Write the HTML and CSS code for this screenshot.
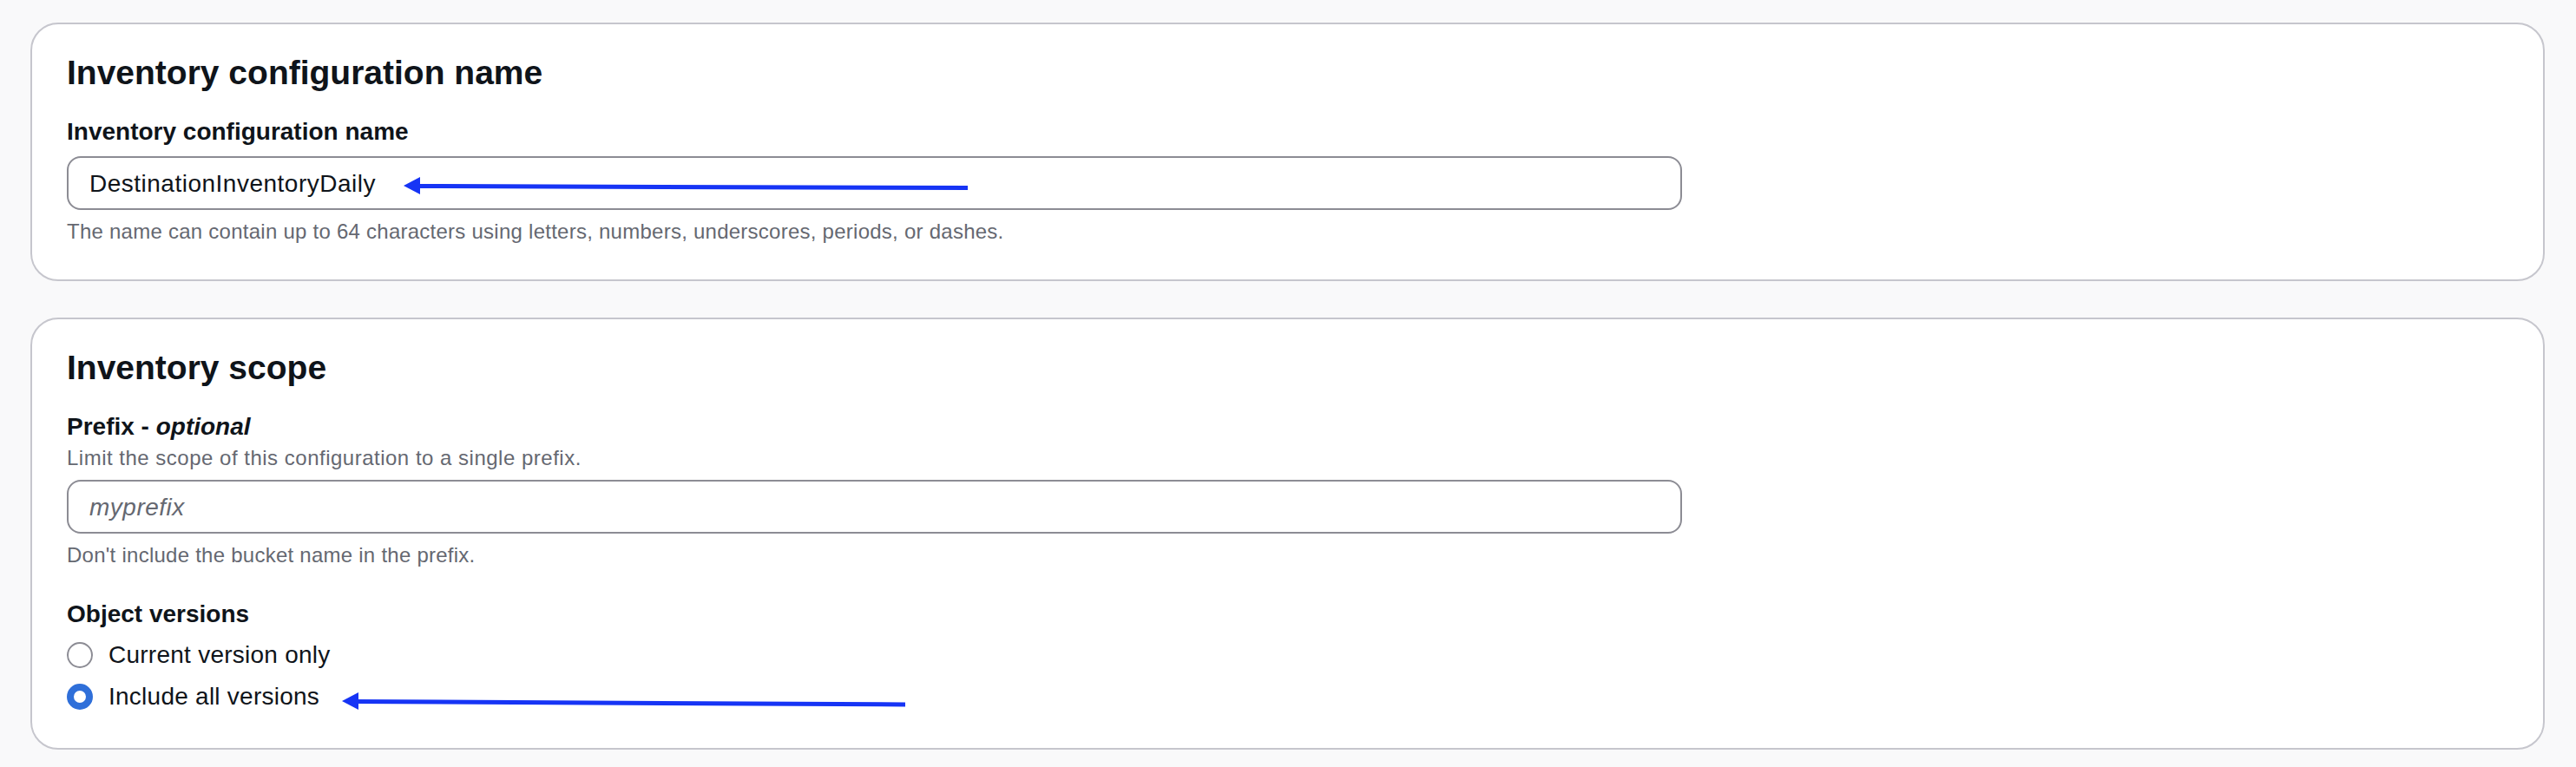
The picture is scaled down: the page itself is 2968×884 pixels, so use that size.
FILE: index.html
```html
<!DOCTYPE html>
<html lang="en">
<head>
<meta charset="utf-8">
<title>Inventory configuration</title>
<link rel="stylesheet" href="styles.css">
</head>
<body>
<main class="page">
  <section class="card">
    <h2 class="card-title">Inventory configuration name</h2>
    <div class="field">
      <label class="field-label" for="cfg-name">Inventory configuration name</label>
      <input class="text-input" id="cfg-name" type="text" value="DestinationInventoryDaily">
      <p class="field-hint">The name can contain up to 64 characters using letters, numbers, underscores, periods, or dashes.</p>
    </div>
  </section>

  <section class="card">
    <h2 class="card-title">Inventory scope</h2>
    <div class="field">
      <label class="field-label" for="cfg-prefix">Prefix - <i>optional</i></label>
      <div class="field-desc">Limit the scope of this configuration to a single prefix.</div>
      <input class="text-input text-input-after-desc" id="cfg-prefix" type="text" placeholder="myprefix">
      <p class="field-hint">Don't include the bucket name in the prefix.</p>
    </div>
    <div class="field field-spaced">
      <div class="field-label">Object versions</div>
      <div class="radio-group">
        <label class="radio"><input class="radio-ctrl" type="radio" name="versions"><span class="radio-label">Current version only</span></label>
        <label class="radio"><input class="radio-ctrl" type="radio" name="versions" checked><span class="radio-label">Include all versions</span></label>
      </div>
    </div>
  </section>

  <svg class="annotations" width="2968" height="884" viewBox="0 0 2968 884" aria-hidden="true">
    <line x1="478" y1="214.5" x2="1115" y2="216.5" stroke="#1634f5" stroke-width="5"/>
    <polygon points="465,214 484,204 484,224" fill="#1634f5"/>
    <line x1="406" y1="808.5" x2="1043" y2="812" stroke="#1634f5" stroke-width="5"/>
    <polygon points="394,808 413,798 413,818" fill="#1634f5"/>
  </svg>
</main>
</body>
</html>
```

FILE: styles.css
```css
* {
  box-sizing: border-box;
}

html,
body {
  margin: 0;
  height: 100%;
}

body {
  background: #f9f9fa;
  font-family: "Liberation Sans", Arial, sans-serif;
  color: #0f141a;
}

.page {
  position: relative;
  height: 884px;
  overflow: hidden;
  padding: 26px 36px 0 35px;
  display: flex;
  flex-direction: column;
  gap: 42px;
}

.card {
  background: #ffffff;
  border: 2px solid #c6c6cd;
  border-radius: 32px;
  padding: 32px 40px 39px;
}

.card-title {
  margin: 0;
  font-size: 39px;
  line-height: 48px;
  font-weight: 700;
}

.field {
  margin-top: 24px;
  display: flex;
  flex-direction: column;
  align-items: flex-start;
}

.field-spaced {
  margin-top: 32px;
}

.field-label {
  display: block;
  font-size: 28px;
  line-height: 40px;
  font-weight: 700;
}

.field-desc,
.field-hint {
  margin: 0;
  font-size: 24px;
  line-height: 32px;
  color: #656871;
}

.field-desc {
  letter-spacing: 0.5px;
}

.field-hint {
  margin-top: 9px;
  letter-spacing: 0.25px;
}

.text-input {
  margin-top: 8px;
  width: 1861px;
  height: 62px;
  border: 2px solid #8c8c94;
  border-radius: 16px;
  padding: 2px 24px 0;
  background: #ffffff;
  font-family: "Liberation Sans", Arial, sans-serif;
  font-size: 28px;
  line-height: 40px;
  letter-spacing: 0.5px;
  color: #0f141a;
  outline: none;
}

.text-input-after-desc {
  margin-top: 9px;
}

.text-input::placeholder {
  color: #656871;
  font-style: italic;
}

.radio-group {
  margin-top: 7px;
  display: flex;
  flex-direction: column;
  gap: 8px;
}

.radio {
  display: flex;
  align-items: center;
  gap: 18px;
  height: 40px;
  font-size: 28px;
  line-height: 40px;
}

.radio-label {
  letter-spacing: 0.25px;
}

.radio-ctrl {
  appearance: none;
  -webkit-appearance: none;
  margin: 0;
  width: 30px;
  height: 30px;
  border: 2px solid #8c8c94;
  border-radius: 50%;
  background: #ffffff;
  flex: none;
}

.radio-ctrl:checked {
  border: 8px solid #2f6fd9;
}

.annotations {
  position: absolute;
  top: 0;
  left: 0;
  pointer-events: none;
}
```
